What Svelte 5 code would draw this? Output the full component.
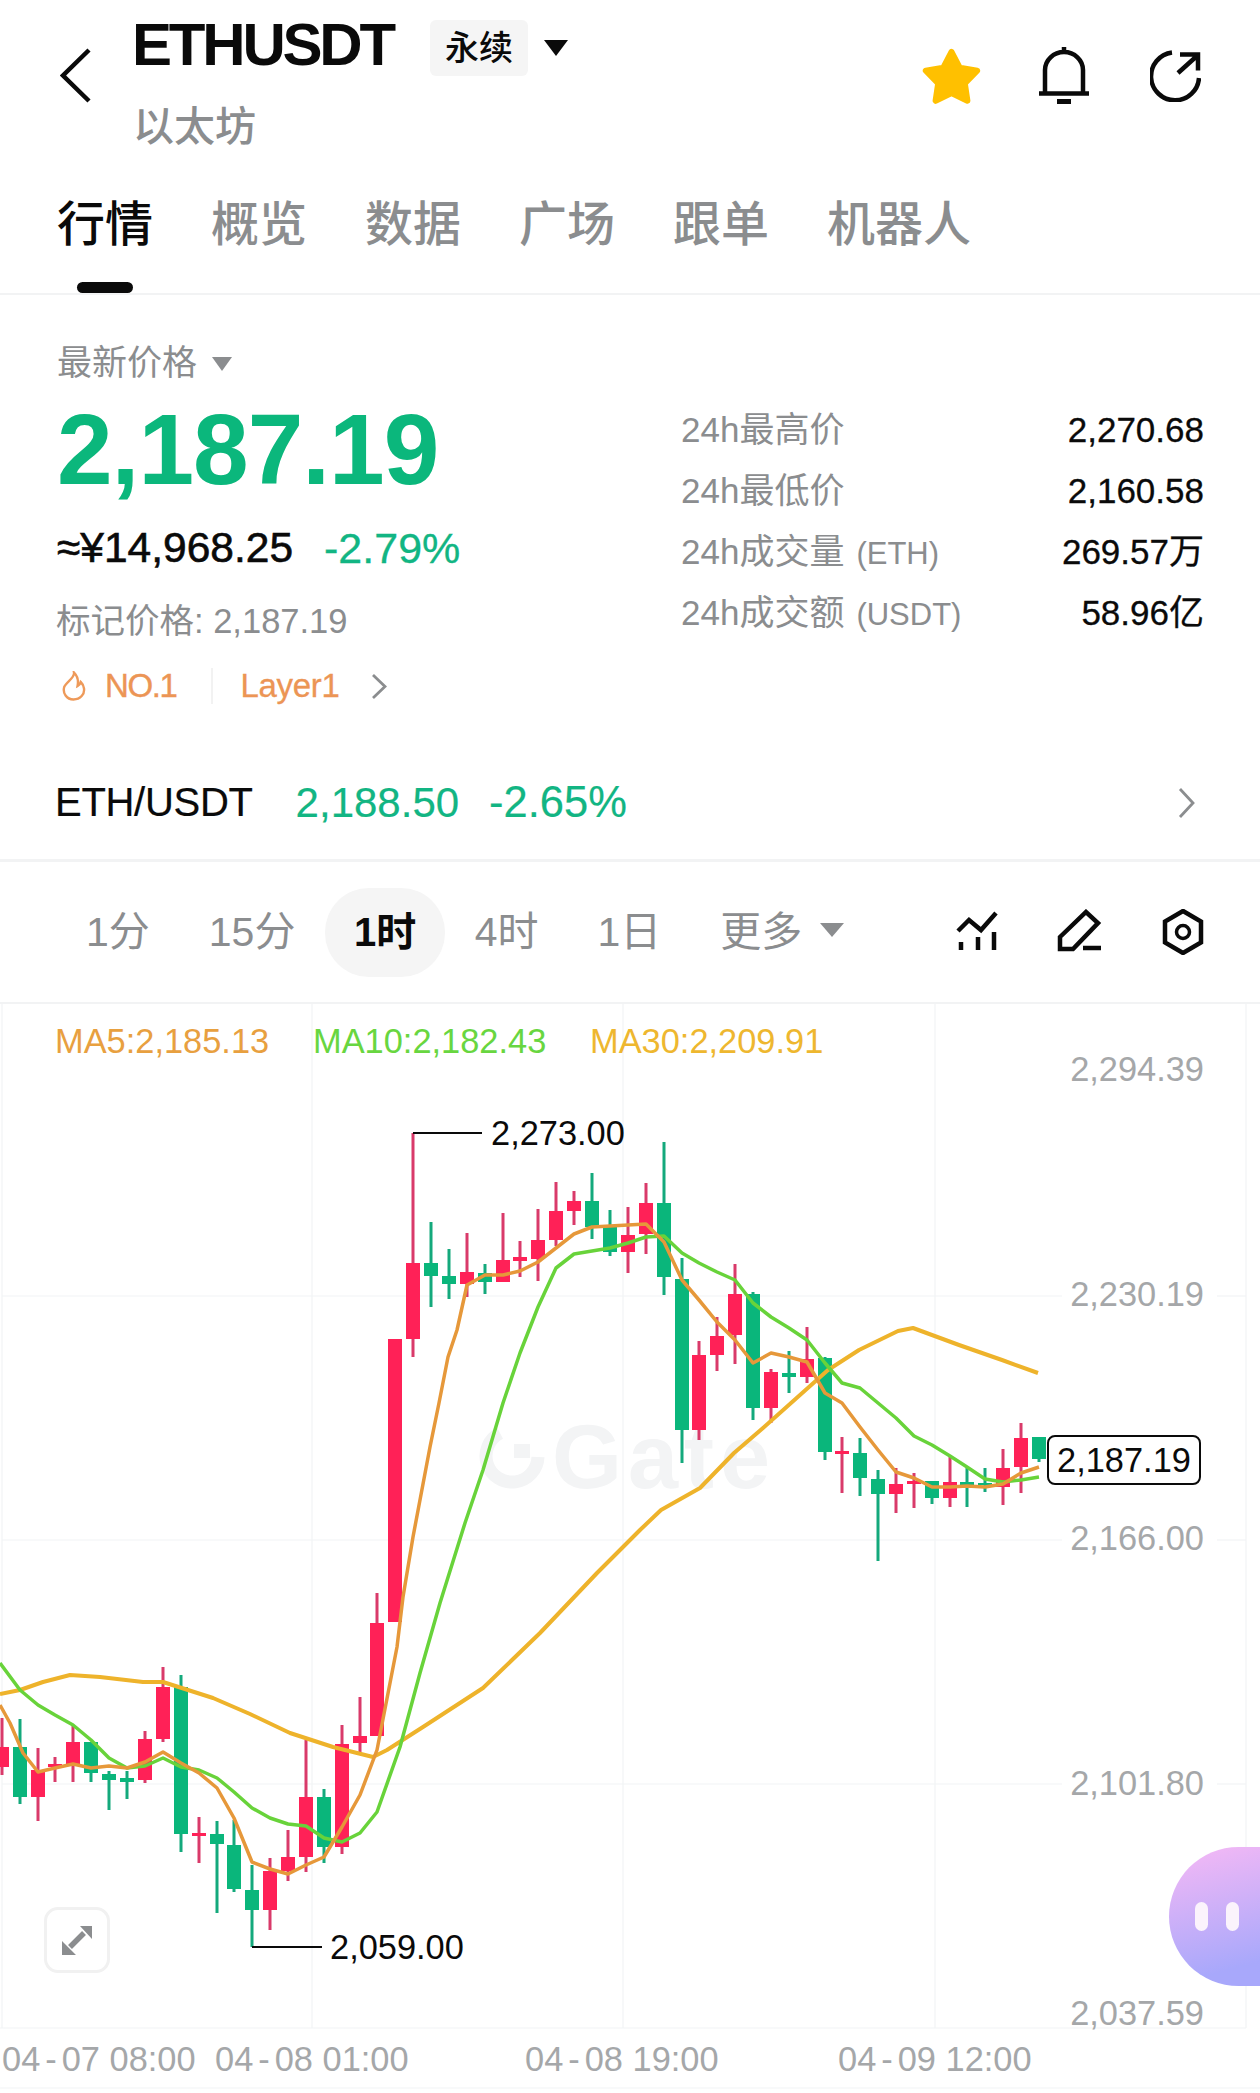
<script>
  const tabs = ["行情", "概览", "数据", "广场", "跟单", "机器人"];
  const frames = ["1分", "15分", "1时", "4时", "1日"];
  const stats = [
    { label: "24h最高价", unit: "", value: "2,270.68" },
    { label: "24h最低价", unit: "", value: "2,160.58" },
    { label: "24h成交量", unit: "(ETH)", value: "269.57万" },
    { label: "24h成交额", unit: "(USDT)", value: "58.96亿" }
  ];

  // rounded star, points around the centre of a 59x56 box
  const star = Array.from({ length: 10 }, (_, i) => {
    const r = i % 2 ? 14 : 27;
    const a = (Math.PI / 5) * i - Math.PI / 2;
    return `${(29.5 + r * Math.cos(a)).toFixed(1)},${(31 + r * Math.sin(a)).toFixed(1)}`;
  }).join(" ");

  // chart uses page coordinates: [x, wickTop, wickBottom, bodyTop, bodyBottom, colour]
  const candles = [
    [2, 1718, 1775, 1747, 1767, "r"], [20, 1719, 1804, 1747, 1797, "g"], [38, 1748, 1821, 1770, 1797, "r"],
    [55, 1757, 1782, 1764, 1767, "r"], [73, 1726, 1782, 1742, 1764, "r"], [91, 1742, 1782, 1742, 1773, "g"],
    [109, 1771, 1810, 1774, 1780, "g"], [127, 1771, 1799, 1778, 1782, "g"], [145, 1731, 1783, 1739, 1780, "r"],
    [163, 1667, 1742, 1687, 1739, "r"], [181, 1675, 1852, 1687, 1834, "g"], [199, 1817, 1863, 1833, 1836, "r"],
    [217, 1821, 1913, 1834, 1844, "g"], [234, 1820, 1892, 1845, 1889, "g"], [252, 1865, 1947, 1890, 1910, "g"],
    [270, 1858, 1930, 1871, 1910, "r"], [288, 1830, 1881, 1857, 1871, "r"], [306, 1740, 1872, 1797, 1857, "r"],
    [324, 1789, 1863, 1797, 1847, "g"], [342, 1725, 1854, 1744, 1847, "r"], [360, 1697, 1753, 1736, 1743, "r"],
    [377, 1593, 1736, 1623, 1736, "r"], [395, 1339, 1622, 1339, 1622, "r"], [413, 1133, 1357, 1263, 1339, "r"],
    [431, 1222, 1307, 1263, 1276, "g"], [449, 1249, 1299, 1276, 1284, "g"], [467, 1233, 1297, 1272, 1284, "r"],
    [485, 1264, 1294, 1273, 1282, "g"], [503, 1213, 1282, 1260, 1282, "r"], [520, 1241, 1277, 1257, 1261, "r"],
    [538, 1209, 1281, 1240, 1259, "r"], [556, 1182, 1246, 1211, 1240, "r"], [574, 1191, 1225, 1201, 1211, "r"],
    [592, 1173, 1239, 1201, 1227, "g"], [610, 1210, 1256, 1227, 1252, "g"], [628, 1207, 1273, 1235, 1252, "r"],
    [646, 1183, 1254, 1203, 1234, "r"], [664, 1142, 1295, 1203, 1277, "g"], [682, 1258, 1463, 1279, 1430, "g"],
    [699, 1341, 1440, 1355, 1430, "r"], [717, 1317, 1371, 1336, 1355, "r"], [735, 1264, 1364, 1294, 1335, "r"],
    [753, 1292, 1420, 1294, 1408, "g"], [771, 1369, 1423, 1372, 1408, "r"], [789, 1351, 1393, 1373, 1377, "g"],
    [807, 1327, 1383, 1359, 1377, "r"], [825, 1357, 1460, 1358, 1452, "g"], [842, 1437, 1493, 1451, 1454, "r"],
    [860, 1438, 1496, 1453, 1478, "g"], [878, 1470, 1561, 1479, 1494, "g"], [896, 1468, 1513, 1484, 1494, "r"],
    [914, 1473, 1508, 1481, 1484, "r"], [932, 1481, 1504, 1481, 1498, "g"], [950, 1457, 1507, 1482, 1498, "r"],
    [967, 1468, 1507, 1482, 1485, "g"], [985, 1468, 1492, 1483, 1485, "g"], [1003, 1449, 1505, 1468, 1487, "r"],
    [1021, 1423, 1493, 1438, 1467, "r"], [1039, 1437, 1462, 1437, 1459, "g"]
  ];

  const ma5 = "0,1705 10,1723 23,1753 38,1772 55,1768 73,1764 91,1768 109,1766 127,1768 145,1762 163,1752 181,1763 199,1773 217,1788 234,1818 252,1862 270,1869 288,1874 306,1865 324,1857 342,1827 360,1795 377,1750 397,1647 403,1597 413,1537 430,1447 439,1403 448,1357 457,1330 467,1285 485,1275 503,1275 520,1271 538,1262 556,1248 574,1234 592,1227 610,1226 628,1225 646,1224 664,1242 682,1280 699,1300 717,1322 735,1340 753,1363 771,1353 789,1357 807,1362 825,1393 842,1403 860,1427 878,1450 896,1472 914,1478 932,1487 950,1487 967,1486 985,1487 1003,1484 1021,1473 1039,1467";
  const ma10 = "0,1663 20,1690 38,1705 55,1715 73,1725 91,1740 109,1758 127,1768 145,1766 163,1758 181,1767 199,1770 217,1778 234,1792 252,1808 270,1818 288,1824 306,1826 324,1838 342,1842 360,1833 377,1812 400,1747 420,1673 440,1603 465,1523 483,1470 503,1403 520,1353 538,1307 556,1268 574,1254 592,1251 610,1248 628,1243 646,1237 664,1236 682,1253 699,1263 717,1272 735,1280 753,1303 771,1317 789,1328 807,1340 825,1363 842,1383 860,1388 878,1403 896,1418 914,1436 932,1445 950,1456 967,1467 985,1479 1003,1482 1021,1480 1039,1477";
  const ma30 = "0,1694 20,1690 43,1682 70,1675 100,1677 143,1682 163,1682 213,1698 250,1714 290,1733 333,1747 373,1757 387,1750 423,1727 483,1688 540,1633 597,1573 640,1530 661,1510 700,1488 734,1453 763,1428 828,1370 859,1350 898,1331 913,1328 959,1345 1002,1360 1038,1373";

  const axis = [
    { text: "2,294.39", y: 1081 }, { text: "2,230.19", y: 1306 }, { text: "2,166.00", y: 1550 },
    { text: "2,101.80", y: 1795 }, { text: "2,037.59", y: 2025 }
  ];
  const times = [
    { md: ["04", "07"], hm: "08:00", x: 2 }, { md: ["04", "08"], hm: "01:00", x: 215 },
    { md: ["04", "08"], hm: "19:00", x: 525 }, { md: ["04", "09"], hm: "12:00", x: 838 }
  ];
</script>

<div class="page">
  <header class="head">
    <svg class="back" width="32" height="55" viewBox="0 0 32 55">
      <path d="M29 2 3 27.5 29 53" />
    </svg>
    <div class="titles">
      <div class="title-row">
        <h1>ETHUSDT</h1>
        <span class="badge">永续</span>
        <span class="tri black"></span>
      </div>
      <div class="sub">以太坊</div>
    </div>
    <div class="head-icons">
      <svg width="59" height="56" viewBox="0 0 59 56">
        <polygon points={star} fill="#ffc000" stroke="#ffc000" stroke-width="6" stroke-linejoin="round" />
      </svg>
      <svg width="50" height="58" viewBox="0 0 50 58" class="line">
        <path d="M25 0v6M6 45V23a19 18 0 0 1 38 0v22M0 46.5h50" />
        <path d="M18 54.5h14" stroke-width="5" />
      </svg>
      <svg width="51" height="52" viewBox="0 0 51 52" class="line">
        <path d="M22 2.5A24 24 0 1 0 49 28" />
        <path d="M30 4.5h18v16M48 5 28 23" />
      </svg>
    </div>
  </header>

  <nav class="tabs">
    {#each tabs as tab, i}
      <div class="tab" class:active={i === 0}>
        {tab}
        {#if i === 0}<i></i>{/if}
      </div>
    {/each}
  </nav>

  <section class="quote">
    <div class="quote-left">
      <div class="latest">最新价格<span class="tri small"></span></div>
      <div class="price">2,187.19</div>
      <div class="approx"><span class="cny">≈¥14,968.25</span><span class="pct">-2.79%</span></div>
      <div class="mark">标记价格: 2,187.19</div>
      <div class="tags">
        <svg width="25" height="30" viewBox="0 0 25 30">
          <path d="M13 1.5c1 5.500-7.500 9-9.800 14.500C1.500 22 5.500 28.500 12.500 28.500S23.800 23 23 17.500c-.4-2.800-1.700-5-3.300-6.500-.5 2.100-1.500 3.500-3.200 4.200C17.500 10.500 16.500 5 13 1.500z" />
        </svg>
        <span class="no">NO.1</span>
        <span class="sep"></span>
        <span class="layer">Layer1</span>
        <svg class="chev" width="16" height="27" viewBox="0 0 16 27"><path d="M2 2l12 11.500L2 25" /></svg>
      </div>
    </div>
    <div class="stats">
      {#each stats as s}
        <div class="stat">
          <span>{s.label}{#if s.unit}<small>{s.unit}</small>{/if}</span>
          <b>{s.value}</b>
        </div>
      {/each}
    </div>
  </section>

  <div class="spot">
    <span class="pair">ETH/USDT</span>
    <span class="spot-price">2,188.50</span>
    <span class="spot-pct">-2.65%</span>
    <svg class="chev end" width="17" height="32" viewBox="0 0 17 32"><path d="M2 2l13 14L2 30" /></svg>
  </div>

  <div class="frames">
    {#each frames as f, i}
      <span class="frame" class:on={i === 2}>{f}</span>
    {/each}
    <span class="frame more">更多<span class="tri small mid"></span></span>
    <div class="tools">
      <svg width="46" height="46" viewBox="0 0 46 46" class="line">
        <path d="M4 22 15 11l12 10L42 4M7 33v8M24 28v13M40 23v18" />
      </svg>
      <svg width="46" height="46" viewBox="0 0 46 46" class="line">
        <path d="M3 28 29 3l12 11-25 26H3zM26 39h18" />
      </svg>
      <svg width="46" height="46" viewBox="0 0 46 46" class="line">
        <path d="M23 2 41 12.500v21L23 44 5 33.500v-21z" />
        <circle cx="23" cy="23" r="6.500" stroke-width="3.500" />
      </svg>
    </div>
  </div>

  <div class="chart">
    <svg class="plot" width="1260" height="1085" viewBox="0 1004 1260 1085">
      <!-- watermark -->
      <g class="mark-logo">
        <path d="M500 1433a26 26 0 1 0 38 24" />
        <rect x="514" y="1444" width="16" height="14" />
        <text x="552" y="1488">Gate</text>
      </g>

      <!-- grid -->
      {#each [2, 312, 623, 935, 1246] as x}
        <line class="grid" x1={x} x2={x} y1="1004" y2="2028" />
      {/each}
      {#each [1296, 1540, 1784] as y}
        <line class="grid" x1="2" x2="1062" y1={y} y2={y} />
        <line class="grid" x1="1217" x2="1246" y1={y} y2={y} />
      {/each}
      <line class="grid" x1="0" x2="1246" y1="2028" y2="2028" />
      <line class="grid" x1="0" x2="1260" y1="2088" y2="2088" />

      {#each candles as [x, wt, wb, bt, bb, c]}
        <rect class={c === "r" ? "wick-r" : "wick-g"} x={x - 1.5} y={wt} width="3" height={wb - wt} />
        <rect class={c === "r" ? "up" : "down"} x={x - 7} y={bt} width="14" height={bb - bt} />
      {/each}

      <polyline class="ma yellow" points={ma30} />
      <polyline class="ma green" points={ma10} />
      <polyline class="ma orange" points={ma5} />

      <!-- legend -->
      <text class="label c-orange" x="55" y="1053">MA5:2,185.13</text>
      <text class="label c-green" x="313" y="1053">MA10:2,182.43</text>
      <text class="label c-yellow" x="590" y="1053">MA30:2,209.91</text>

      <!-- axes -->
      {#each axis as a}
        <text class="label muted" x="1204" y={a.y} text-anchor="end">{a.text}</text>
      {/each}
      {#each times as t}
        <text class="label muted" x={t.x} y="2071">{t.md[0]}<tspan dx="5">-</tspan><tspan dx="5">{t.md[1]} {t.hm}</tspan></text>
      {/each}

      <!-- high / low markers -->
      <path class="marker" d="M413 1133h69M252 1947h70" />
      <text class="label" x="491" y="1145">2,273.00</text>
      <text class="label" x="330" y="1959">2,059.00</text>

      <!-- last price -->
      <rect class="last" x="1048" y="1436" width="152" height="48" rx="7" />
      <text class="label" x="1124" y="1472" text-anchor="middle">2,187.19</text>
    </svg>

    <button class="expand" aria-label="expand">
      <svg width="34" height="34" viewBox="0 0 34 34">
        <path d="M20 3h12v13zM2 18v14h14z" fill="#8b8d8f" />
        <path d="M24 10 10 24" stroke="#8b8d8f" stroke-width="5.500" />
      </svg>
    </button>
    <div class="bubble"><i></i><i></i></div>
  </div>
</div>

<style>
  :global(body) { margin: 0; background: #fff; }
  .page {
    width: 1260px;
    height: 2093px;
    overflow: hidden;
    background: #fff;
    color: #0a0a0a;
    font-family: "Liberation Sans", "Noto Sans CJK SC", sans-serif;
  }
  svg { display: block; }
  .line { fill: none; stroke: #0a0a0a; stroke-width: 4.5; }

  .head { display: flex; height: 190px; }
  .back { margin: 48px 0 0 60px; fill: none; stroke: #0a0a0a; stroke-width: 4.500; }
  .titles { margin: 15px 0 0 41px; }
  .title-row { display: flex; align-items: center; height: 60px; }
  h1 { margin: 0 0 0 -1px; font-size: 60px; line-height: 60px; font-weight: 700; letter-spacing: -3.200px; }
  .badge {
    margin: 5px 0 0 37px;
    width: 98px;
    height: 56px;
    line-height: 56px;
    text-align: center;
    font-size: 34px;
    font-weight: 500;
    background: #f5f5f5;
    border-radius: 6px;
  }
  .tri { display: inline-block; width: 0; height: 0; border-style: solid; border-color: #8b8d8f transparent transparent; }
  .tri.black { margin: 6px 0 0 16px; border-width: 16px 12px 0; border-top-color: #0a0a0a; }
  .tri.small { margin-left: 15px; border-width: 14px 10px 0; vertical-align: 4px; }
  .tri.mid { margin-left: 18px; border-width: 14px 12px 0; vertical-align: 9px; }
  .sub { margin-top: 28px; font-size: 41px; line-height: 48px; font-weight: 500; color: #8b8d8f; }
  .head-icons { display: flex; align-items: center; margin: 47px 59px 0 auto; height: 58px; gap: 58px; }
  .head-icons svg:nth-child(3) { margin-left: 3px; }

  .tabs { display: flex; gap: 58px; height: 98px; padding: 5px 0 0 57px; border-bottom: 2px solid #f2f3f4; }
  .tab { display: flex; flex-direction: column; align-items: center; font-size: 48px; line-height: 60px; font-weight: 500; color: #8b8d8f; }
  .tab.active { color: #0a0a0a; }
  .tab i { width: 56px; height: 11px; margin-top: 27px; border-radius: 6px; background: #0a0a0a; }

  .quote { display: flex; height: 412px; padding: 48px 56px 0 57px; box-sizing: border-box; }
  .quote-left { width: 624px; flex: none; }
  .latest { font-size: 35px; line-height: 40px; color: #8b8d8f; }
  .price { margin: 16px 0 0 0; font-size: 100px; line-height: 100px; font-weight: 700; letter-spacing: -1px; color: #0bb77c; }
  .approx { display: flex; margin-top: 24px; font-size: 42.500px; line-height: 50px; }
  .cny { -webkit-text-stroke: 0.6px #0a0a0a; }
  .pct { margin-left: 31px; font-size: 43px; color: #12b583; -webkit-text-stroke: 0.3px #12b583; }
  .mark { margin: 28px 0 0 -1px; font-size: 34.500px; line-height: 40px; color: #8b8d8f; }
  .tags { display: flex; align-items: center; margin-top: 25px; height: 40px; font-size: 33px; color: #ec9555; }
  .tags svg:first-child { margin-left: 4px; fill: none; stroke: #ee9a5a; stroke-width: 2.400; }
  .no { margin-left: 19px; letter-spacing: -1.400px; -webkit-text-stroke: 0.4px #ec9555; }
  .sep { width: 2px; height: 36px; margin: 0 27px 0 35px; background: #f2f2f2; }
  .layer { letter-spacing: -0.300px; -webkit-text-stroke: 0.3px #ec9555; }
  .chev { fill: none; stroke: #8b8d8f; stroke-width: 2.800; }
  .tags .chev { margin-left: 31px; }
  .stats { margin-top: 56px; flex: 1; }
  .stat { display: flex; justify-content: space-between; height: 61px; line-height: 61px; font-size: 35px; color: #8b8d8f; }
  .stat small { margin-left: 12px; font-size: 31px; }
  .stat b { font-weight: 400; color: #0a0a0a; -webkit-text-stroke: 0.3px #0a0a0a; }

  .spot {
    display: flex;
    align-items: center;
    box-sizing: border-box;
    height: 155px;
    padding: 39px 65px 0 55px;
    border-bottom: 3px solid #f2f3f4;
    font-size: 42px;
    color: #12b583;
    -webkit-text-stroke: 0.2px #12b583;
  }
  .pair { font-size: 40px; color: #0a0a0a; letter-spacing: -0.300px; -webkit-text-stroke: 0.2px #0a0a0a; }
  .spot-price { margin-left: 43px; }
  .spot-pct { margin-left: 30px; font-size: 43.500px; }
  .chev.end { margin-left: auto; }

  .frames {
    display: flex;
    align-items: center;
    box-sizing: border-box;
    height: 142px;
    padding: 0 54px 0 56.500px;
    border-bottom: 2px solid #f2f3f4;
    font-size: 41px;
    color: #8b8d8f;
  }
  .frame { padding: 0 29.500px; line-height: 89px; height: 89px; white-space: nowrap; }
  .frame.on { padding: 0 29px; background: #f5f5f5; border-radius: 44px; color: #0a0a0a; font-size: 40px; font-weight: 700; }
  .tools { display: flex; gap: 57px; margin-left: auto; }

  .chart { position: relative; }
  .grid { stroke: #f2f3f5; stroke-width: 1.200; }
  .wick-r { fill: #d93a6a; }
  .wick-g { fill: #14a97c; }
  .up { fill: #ff2157; }
  .down { fill: #0ab67b; }
  .ma { fill: none; stroke-width: 3.500; stroke-linejoin: round; }
  .yellow { stroke: #eeb32b; stroke-width: 4; }
  .green { stroke: #68d33a; }
  .orange { stroke: #e6983a; }
  .label { font-size: 34.400px; fill: #0a0a0a; }
  .c-orange { fill: #e8a03f; }
  .c-green { fill: #68d640; }
  .c-yellow { fill: #eeb72f; }
  .muted { fill: #a5a7a9; }
  .marker { fill: none; stroke: #0a0a0a; stroke-width: 2; }
  .last { fill: #fff; stroke: #0a0a0a; stroke-width: 2; }
  .mark-logo { fill: #f3f4f5; }
  .mark-logo path { fill: none; stroke: #f3f4f5; stroke-width: 13; }
  .mark-logo text { font-size: 90px; font-weight: 700; letter-spacing: 6px; }

  .expand {
    position: absolute;
    left: 44px;
    top: 903px;
    display: flex;
    align-items: center;
    justify-content: center;
    box-sizing: border-box;
    width: 66px;
    height: 66px;
    padding: 0;
    background: #fff;
    border: 3px solid #f1f1f1;
    border-radius: 14px;
  }
  .bubble {
    position: absolute;
    right: 0;
    top: 843px;
    display: flex;
    align-items: center;
    gap: 18px;
    box-sizing: border-box;
    width: 91px;
    height: 139px;
    padding-left: 26px;
    border-radius: 70px 0 0 70px;
    background: linear-gradient(165deg, #f7b9f5, #a8a8fb 85%);
  }
  .bubble i { width: 13px; height: 29px; border-radius: 7px; background: #fbf3fc; }
</style>
